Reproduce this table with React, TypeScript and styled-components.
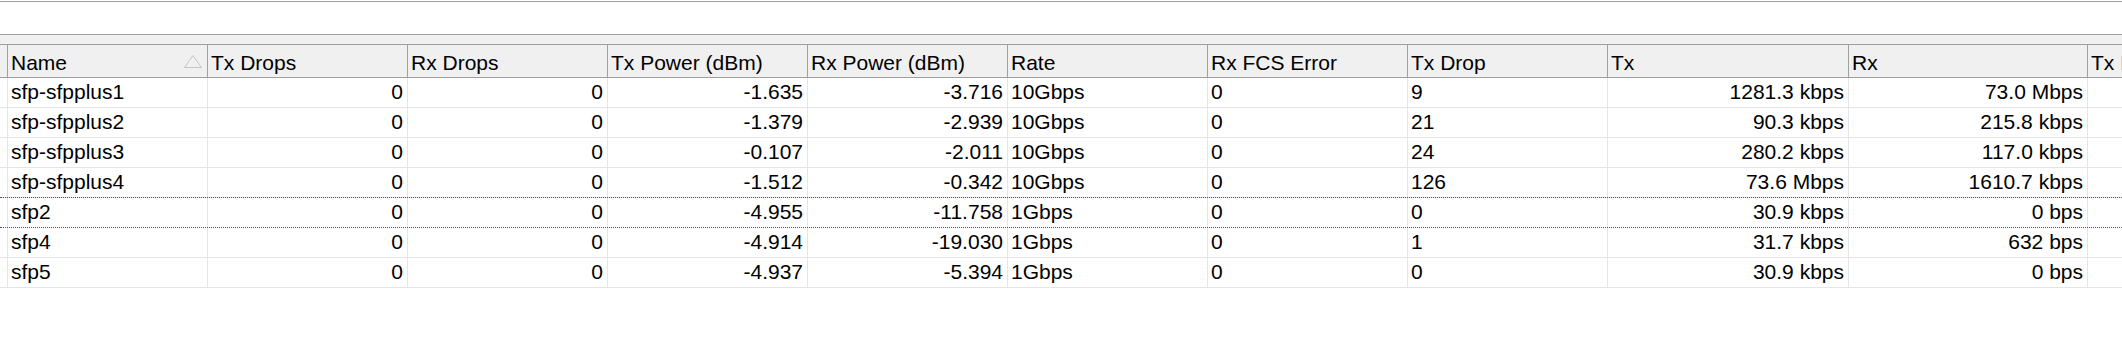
import styled, { createGlobalStyle } from 'styled-components'

type Align = 'left' | 'right'

interface Column {
  title: string
  width: number
  align: Align
  sorted?: boolean
}

const columns: Column[] = [
  { title: '', width: 8, align: 'left' },
  { title: 'Name', width: 200, align: 'left', sorted: true },
  { title: 'Tx Drops', width: 200, align: 'right' },
  { title: 'Rx Drops', width: 200, align: 'right' },
  { title: 'Tx Power (dBm)', width: 200, align: 'right' },
  { title: 'Rx Power (dBm)', width: 200, align: 'right' },
  { title: 'Rate', width: 200, align: 'left' },
  { title: 'Rx FCS Error', width: 200, align: 'left' },
  { title: 'Tx Drop', width: 200, align: 'left' },
  { title: 'Tx', width: 241, align: 'right' },
  { title: 'Rx', width: 239, align: 'right' },
  { title: 'Tx Packet', width: 200, align: 'right' },
]

// one entry per interface, in the same order as the columns (flag column first)
const rows: string[][] = [
  ['', 'sfp-sfpplus1', '0', '0', '-1.635', '-3.716', '10Gbps', '0', '9', '1281.3 kbps', '73.0 Mbps', ''],
  ['', 'sfp-sfpplus2', '0', '0', '-1.379', '-2.939', '10Gbps', '0', '21', '90.3 kbps', '215.8 kbps', ''],
  ['', 'sfp-sfpplus3', '0', '0', '-0.107', '-2.011', '10Gbps', '0', '24', '280.2 kbps', '117.0 kbps', ''],
  ['', 'sfp-sfpplus4', '0', '0', '-1.512', '-0.342', '10Gbps', '0', '126', '73.6 Mbps', '1610.7 kbps', ''],
  ['', 'sfp2', '0', '0', '-4.955', '-11.758', '1Gbps', '0', '0', '30.9 kbps', '0 bps', ''],
  ['', 'sfp4', '0', '0', '-4.914', '-19.030', '1Gbps', '0', '1', '31.7 kbps', '632 bps', ''],
  ['', 'sfp5', '0', '0', '-4.937', '-5.394', '1Gbps', '0', '0', '30.9 kbps', '0 bps', ''],
]

const focusedRow = 4

const gridTemplate = columns.map(c => `${c.width}px`).join(' ')

const App = () => {
  return (
    <>
      <GlobalStyle />
      <Window>
        <Toolbar />
        <FilterBand />
        <Table>
          <HeaderRow>
            {columns.map((col, i) => (
              <HeaderCell key={i}>
                {col.title}
                {col.sorted && (
                  <SortMark width="18" height="13" viewBox="0 0 18 13">
                    <polygon points="9,0.5 17.5,12.5 0.5,12.5" fill="none" stroke="#c4c4c4" strokeWidth="1" />
                  </SortMark>
                )}
              </HeaderCell>
            ))}
          </HeaderRow>
          {rows.map((row, r) => (
            <Row key={r} $focused={r === focusedRow}>
              {row.map((value, i) => (
                <Cell key={i} $align={columns[i].align}>
                  {value}
                </Cell>
              ))}
            </Row>
          ))}
        </Table>
      </Window>
    </>
  )
}

export default App

const GlobalStyle = createGlobalStyle`
  html, body {
    margin: 0;
    padding: 0;
    background: #ffffff;
  }
  body {
    font-family: "Liberation Sans", Arial, sans-serif;
    font-size: 21px;
    color: #000000;
  }
`

const Window = styled.div`
  width: 2122px;
  height: 348px;
  overflow: hidden;
  background: #ffffff;
  padding-top: 1px;
  box-sizing: border-box;
`

// empty tool strip above the list
const Toolbar = styled.div`
  height: 32px;
  border-top: 1px solid #a0a0a0;
  border-bottom: 1px solid #a0a0a0;
`

const FilterBand = styled.div`
  height: 9px;
  background: #f0f0f0;
  border-bottom: 1px solid #a0a0a0;
`

const Table = styled.div`
  display: flex;
  flex-direction: column;
  width: max-content;
`

const HeaderRow = styled.div`
  display: grid;
  grid-template-columns: ${gridTemplate};
  height: 33px;
  background: #f0f0f0;
  border-bottom: 1px solid #a0a0a0;
  box-sizing: border-box;
`

const HeaderCell = styled.div`
  position: relative;
  box-sizing: border-box;
  padding: 3px 3px 0;
  line-height: 29px;
  white-space: nowrap;
  overflow: hidden;
  border-right: 1px solid #a0a0a0;
`

const SortMark = styled.svg`
  position: absolute;
  right: 5px;
  top: 10px;
`

const Row = styled.div<{ $focused?: boolean }>`
  display: grid;
  grid-template-columns: ${gridTemplate};
  height: 30px;
  box-sizing: border-box;
  border-bottom: 1px solid #e5e5e5;
  ${props =>
    props.$focused &&
    `
    height: 31px;
    margin-top: -1px;
    border-top: 1px dotted #555555;
    border-bottom: 1px dotted #555555;
  `}
`

const Cell = styled.div<{ $align: Align }>`
  box-sizing: border-box;
  padding: 0 4px 0 3px;
  line-height: 28px;
  white-space: nowrap;
  overflow: visible;
  text-align: ${props => props.$align};
  border-right: 1px solid #e5e5e5;
`
